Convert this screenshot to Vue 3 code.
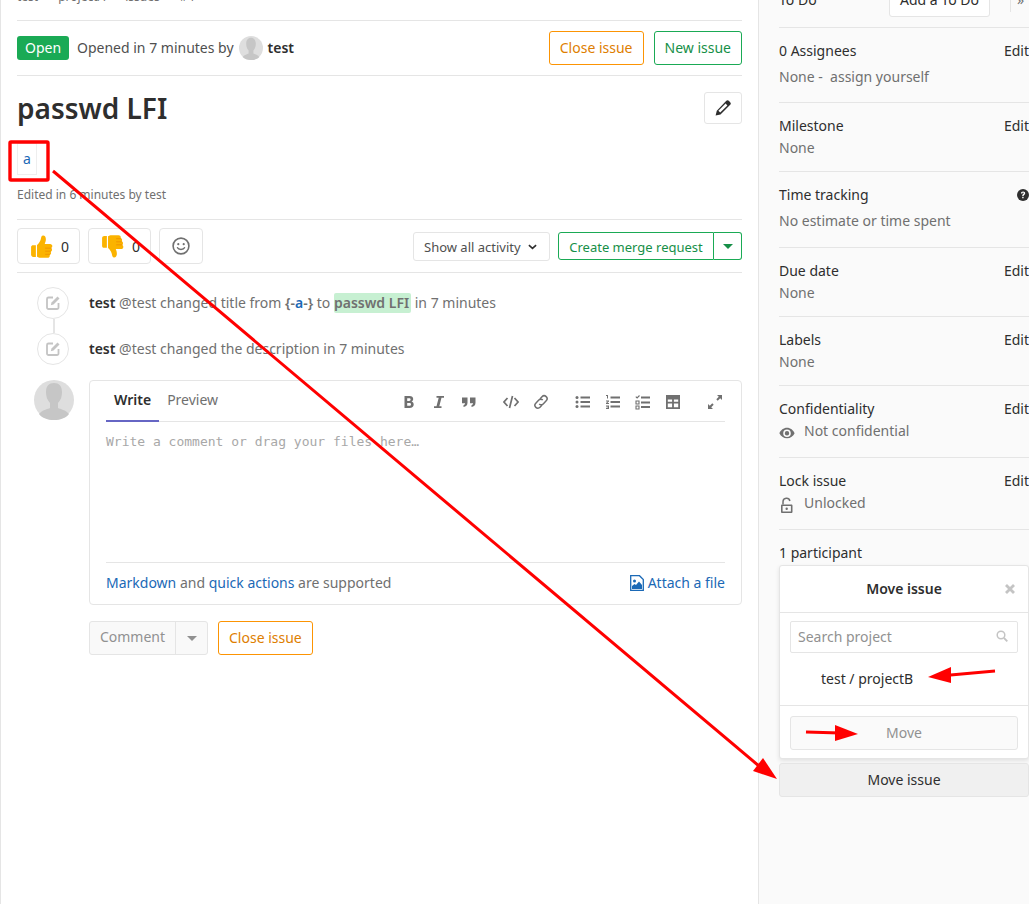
<script setup>
const breadcrumbs = ['test', 'projectA', 'issues', '#4']
</script>

<template>
  <div class="page">
    <main class="main">
      <div class="crumbs">
        <span v-for="c in breadcrumbs" :key="c">{{ c }}</span>
      </div>

      <div class="issue-head">
        <span class="badge">Open</span>
        <span class="opened">Opened in 7 minutes by</span>
        <svg class="av24" viewBox="0 0 40 40"><circle cx="20" cy="20" r="20" fill="#dedede"/><path d="M6 35c3-4 8-5 10-6v-5c-3-3-4-7-4-11 0-6 3-10 8-10s8 4 8 10c0 4-1 8-4 11v5c2 1 7 2 10 6-3 3-8 5-14 5S9 38 6 35z" fill="#c6c6c6"/></svg>
        <b class="author">test</b>
        <span class="spacer"></span>
        <button class="btn warn">Close issue</button>
        <button class="btn ok">New issue</button>
      </div>

      <div class="title-row">
        <h2>passwd LFI</h2>
        <button class="btn edit">
          <svg viewBox="0 0 16 16" width="16" height="16"><path d="M11.300 .8a1.800 1.800 0 0 1 2.500 0l1.400 1.400a1.800 1.800 0 0 1 0 2.500L5.500 14.400 .6 15.600l1.200-4.900zM3.400 10.800l1.800 1.800 7.200-7.200-1.800-1.800z" fill="#2e2e2e"/></svg>
        </button>
      </div>

      <div class="desc"><a>a</a></div>
      <div class="edited">Edited in 6 minutes by test</div>

      <div class="awards">
        <button class="award">
          <svg viewBox="0 0 24 24" width="25" height="25"><path d="M2 12.500c0-1.200 1-1.800 2-1.800h2.600V22H4c-1 0-2-.8-2-2zM7.700 10.600c1.500-1 3-3.300 3.600-5.500.4-1.600.4-3.600 2.300-3.600 1.700 0 2.600 1.600 2.600 3.600 0 1.700-.6 3.200-1.100 4.400h5.200c1.200 0 2.100 1 2.100 2.100 0 .8-.5 1.500-1.100 1.900.5.4.8 1 .8 1.600 0 .9-.6 1.600-1.300 1.900.3.4.4.8.4 1.200 0 .9-.6 1.600-1.400 1.900.1.300.2.500.2.800 0 1.100-1 2-2.100 2H11c-1.300 0-2.300-.6-3.300-1z" fill="#fbb300"/><path d="M15.500 13.600h6M15.500 16.500h5.500M15.500 19.500h4.500" stroke="#ef8f00" stroke-width=".8" fill="none"/></svg>
          <span>0</span>
        </button>
        <button class="award">
          <svg viewBox="0 0 24 24" width="25" height="25"><path d="M2 11.500c0 1.200 1 1.800 2 1.800h2.600V2H4C3 2 2 2.800 2 4zM7.700 13.400c1.500 1 3 3.300 3.600 5.500.4 1.600.4 3.600 2.300 3.600 1.700 0 2.600-1.600 2.600-3.600 0-1.700-.6-3.200-1.100-4.400h5.200c1.200 0 2.100-1 2.100-2.100 0-.8-.5-1.500-1.100-1.900.5-.4.8-1 .8-1.600 0-.9-.6-1.600-1.300-1.900.3-.4.4-.8.4-1.200 0-.9-.6-1.600-1.400-1.900.1-.3.2-.5.2-.8 0-1.100-1-2-2.100-2H11c-1.300 0-2.300.6-3.300 1z" fill="#fbb300"/><path d="M15.500 10.400h6M15.500 7.500h5.500M15.500 4.500h4.500" stroke="#ef8f00" stroke-width=".8" fill="none"/></svg>
          <span>0</span>
        </button>
        <button class="award smile">
          <svg viewBox="0 0 18 18" width="18" height="18"><circle cx="9" cy="9" r="7.900" fill="none" stroke="#707070" stroke-width="1.600"/><circle cx="6.300" cy="7.200" r="1.100" fill="#707070"/><circle cx="11.700" cy="7.200" r="1.100" fill="#707070"/><path d="M5.500 10.800c1 2.100 6 2.100 7 0" fill="none" stroke="#707070" stroke-width="1.500" stroke-linecap="round"/></svg>
        </button>
        <span class="spacer"></span>
        <button class="activity">
          Show all activity
          <svg viewBox="0 0 10 6" width="9" height="6"><path d="M1 1l4 3.500L9 1" fill="none" stroke="#2e2e2e" stroke-width="1.800"/></svg>
        </button>
        <div class="mr">
          <button class="mr-main">Create merge request</button>
          <button class="mr-caret"><i class="caret green"></i></button>
        </div>
      </div>

      <div class="note">
        <span class="note-icon">
          <svg viewBox="0 0 16 16" width="16" height="16"><path d="M8 2.500H3.500a1.500 1.500 0 0 0-1.500 1.500v8.500A1.500 1.500 0 0 0 3.500 14H12a1.500 1.500 0 0 0 1.500-1.500V8" fill="none" stroke="#c4c4c4" stroke-width="1.800"/><path d="M12.500 1.500l2 2L8.500 9.500l-2.700.7.700-2.700z" fill="#c4c4c4"/></svg>
        </span>
        <p><b>test</b> @test changed title from <b class="muted">{-<a>a</a>-}</b> to <b class="hl">passwd LFI</b> in 7 minutes</p>
      </div>
      <div class="note second">
        <span class="note-icon">
          <svg viewBox="0 0 16 16" width="16" height="16"><path d="M8 2.500H3.500a1.500 1.500 0 0 0-1.500 1.500v8.500A1.500 1.500 0 0 0 3.500 14H12a1.500 1.500 0 0 0 1.500-1.500V8" fill="none" stroke="#c4c4c4" stroke-width="1.800"/><path d="M12.500 1.500l2 2L8.500 9.500l-2.700.7.700-2.700z" fill="#c4c4c4"/></svg>
        </span>
        <p><b>test</b> @test changed the description in 7 minutes</p>
      </div>

      <div class="compose">
        <svg class="av40" viewBox="0 0 40 40"><circle cx="20" cy="20" r="20" fill="#dedede"/><path d="M5 34c3-4 9-5 11-6v-5c-3-3-4-7-4-11 0-6 3-9 8-9s8 3 8 9c0 4-1 8-4 11v5c2 1 8 2 11 6-3 4-9 6-15 6S8 38 5 34z" fill="#c6c6c6"/></svg>
        <div class="form-col">
          <div class="form">
            <div class="tabs">
              <span class="tab on">Write</span>
              <span class="tab">Preview</span>
              <div class="tools">
                <div class="tool-group">
                  <svg viewBox="0 0 16 16"><path d="M3.500 2h5c2.300 0 3.700 1.100 3.700 3 0 1.200-.6 2.100-1.700 2.600 1.400.4 2.200 1.500 2.200 2.900 0 2.200-1.600 3.500-4.200 3.500h-5zM6.200 4.200v2.700h1.900c1 0 1.500-.5 1.500-1.400s-.5-1.300-1.500-1.300zm0 4.800v2.800h2.100c1.100 0 1.700-.5 1.700-1.400S9.400 9 8.300 9z"/></svg>
                  <svg viewBox="0 0 16 16"><path d="M5.500 2H13v1.800h-2.500L8.300 12.200H10.500V14H3v-1.800h2.500l2.200-8.400H5.500z"/></svg>
                  <svg viewBox="0 0 16 16"><path d="M1 3.500h5.500v5.200c0 2.400-1.600 4-4 4.300v-1.800c1-.3 1.500-1 1.600-1.900H1zM9 3.500h5.500v5.200c0 2.400-1.600 4-4 4.300v-1.800c1-.3 1.500-1 1.600-1.900H9z"/></svg>
                </div>
                <div class="tool-group">
                  <svg viewBox="0 0 16 16" fill="none" stroke="#707070" stroke-width="1.700"><path d="M4.500 4L1 8l3.500 4M11.500 4L15 8l-3.500 4M9.500 2L6.500 14"/></svg>
                  <svg viewBox="0 0 16 16" fill="none" stroke="#707070" stroke-width="1.500"><path d="M7 5l2-2.300a2.900 2.900 0 0 1 4.200 4.100l-3 3.200a2.800 2.800 0 0 1-4 0"/><path d="M9 11l-2 2.300a2.900 2.900 0 0 1-4.200-4.100l3-3.200a2.800 2.800 0 0 1 4 0"/></svg>
                </div>
                <div class="tool-group">
                  <svg viewBox="0 0 16 16"><path d="M5.500 2.500H15v2H5.500zM5.500 7H15v2H5.500zM5.500 11.500H15v2H5.500z"/><circle cx="2" cy="3.500" r="1.500"/><circle cx="2" cy="8" r="1.500"/><circle cx="2" cy="12.500" r="1.500"/></svg>
                  <svg viewBox="0 0 16 16"><path d="M5.500 2.500H15v2H5.500zM5.500 7H15v2H5.500zM5.500 11.500H15v2H5.500zM1 1h2v3.500H2V2H1zM1 6.500h3v.9L2.300 9H4v1H1v-.9L2.700 7.500H1zM1 11.500h3v3.500H1v-1h2v-.5H1.500v-.8H3V12.400H1z"/></svg>
                  <svg viewBox="0 0 16 16"><path d="M6 2.500h9v2H6zM6 7.500h9v2H6zM6 12h9v2H6z"/><path d="M.8 2.600l1.300 1.300L4.500 1.500" fill="none" stroke="#707070" stroke-width="1.100"/><path d="M1 7h3v3H1zM1 12h3v3H1z" fill="none" stroke="#707070" stroke-width="1.100"/></svg>
                  <svg viewBox="0 0 16 16"><path fill-rule="evenodd" d="M1 1h14v14H1zM2.800 5.500v2.300h4.300V5.500zm6.100 0v2.300h4.300V5.500zM2.800 9.500v3.700h4.300V9.500zm6.100 0v3.700h4.300V9.500z"/></svg>
                </div>
                <div class="tool-group">
                  <svg viewBox="0 0 16 16"><path d="M10 1h5v5l-1.800-1.800-2.500 2.500-1.400-1.400 2.500-2.500zM1 15v-5l1.800 1.800 2.500-2.500 1.400 1.400-2.500 2.500L6 15z"/></svg>
                </div>
              </div>
            </div>
            <div class="editor">Write a comment or drag your files here…</div>
            <div class="form-foot">
              <span><a>Markdown</a> and <a>quick actions</a> are supported</span>
              <a class="attach">
                <svg viewBox="0 0 14 16" width="14" height="16"><path d="M.7.700h8.800l3.800 3.800v10.800H.7z" fill="#fff" stroke="#1b69b6" stroke-width="1.300"/><circle cx="4.500" cy="6" r="1.500" fill="#1b69b6"/><path d="M2 14v-3l2.500-2 1.500 1 3-3.500 3 3.500v4z" fill="#1b69b6"/></svg>
                Attach a file
              </a>
            </div>
          </div>
          <div class="form-actions">
            <div class="comment-split">
              <span class="comment-main">Comment</span>
              <span class="comment-caret"><i class="caret grey"></i></span>
            </div>
            <button class="btn warn">Close issue</button>
          </div>
        </div>
      </div>
    </main>

    <aside class="side">
      <div class="todo">
        <span>To Do</span>
        <span class="spacer"></span>
        <button class="add-todo">Add a To Do</button>
        <span class="sep"></span>
        <span class="collapse">»</span>
      </div>

      <div class="block">
        <div class="row"><span>0 Assignees</span><span>Edit</span></div>
        <div class="value wide tight">None -&nbsp; assign yourself</div>
      </div>
      <div class="block">
        <div class="row"><span>Milestone</span><span>Edit</span></div>
        <div class="value">None</div>
      </div>
      <div class="block">
        <div class="row">
          <span>Time tracking</span>
          <svg class="help" viewBox="0 0 14 14" width="14" height="14"><circle cx="7" cy="7" r="6" fill="#2e2e2e"/><path d="M4.900 5.400c0-1.200.9-2 2.200-2s2.100.8 2.100 1.800c0 1.500-1.600 1.500-1.600 2.700H6.200c0-1.800 1.500-1.800 1.500-2.600 0-.4-.2-.7-.6-.7-.5 0-.7.300-.7.800zM6.200 8.800h1.400v1.500H6.200z" fill="#fff"/></svg>
        </div>
        <div class="value wide">No estimate or time spent</div>
      </div>
      <div class="block">
        <div class="row"><span>Due date</span><span>Edit</span></div>
        <div class="value">None</div>
      </div>
      <div class="block">
        <div class="row"><span>Labels</span><span>Edit</span></div>
        <div class="value">None</div>
      </div>
      <div class="block">
        <div class="row"><span>Confidentiality</span><span>Edit</span></div>
        <div class="value roomy">
          <svg viewBox="0 0 16 16" width="16" height="16"><path fill-rule="evenodd" d="M8 2.800c3.500 0 6.300 2.500 7.600 5.400-1.300 2.900-4.100 5-7.600 5S1.700 11.100.4 8.200C1.700 5.300 4.500 2.800 8 2.800zm0 1.600a3.800 3.800 0 1 0 0 7.600 3.800 3.800 0 0 0 0-7.600zm0 1.600a2.200 2.200 0 1 1 0 4.400 2.200 2.200 0 0 1 0-4.400z" fill="#707070"/></svg>
          Not confidential
        </div>
      </div>
      <div class="block">
        <div class="row"><span>Lock issue</span><span>Edit</span></div>
        <div class="value roomy">
          <svg viewBox="0 0 16 16" width="16" height="16"><path fill-rule="evenodd" d="M3 7.500h9.500c.5 0 1 .5 1 1V15c0 .5-.5 1-1 1H3c-.5 0-1-.5-1-1V8.500c0-.5.5-1 1-1zm.6 1.500v5.500h8.300V9zm4.100 1.500a1.200 1.200 0 1 1 0 2.400 1.200 1.200 0 0 1 0-2.400z" fill="#707070"/><path d="M4 7.500V4.800a3.500 3.500 0 0 1 6.900-.8" fill="none" stroke="#707070" stroke-width="1.500"/></svg>
          Unlocked
        </div>
      </div>

      <div class="participants">
        <div>1 participant</div>
        <div class="popup">
          <div class="popup-head">
            <span>Move issue</span>
            <svg class="popup-close" viewBox="0 0 10 10" width="10" height="10"><path d="M1 1l8 8M9 1l-8 8" stroke="#c4c4c4" stroke-width="2.800"/></svg>
          </div>
          <div class="popup-body">
            <div class="search">
              <span>Search project</span>
              <svg viewBox="0 0 12 12" width="12" height="12"><circle cx="5" cy="5" r="3.800" fill="none" stroke="#c4c4c4" stroke-width="1.500"/><path d="M8 8l3.300 3.300" stroke="#c4c4c4" stroke-width="1.800"/></svg>
            </div>
            <div class="project">test / projectB</div>
          </div>
          <div class="popup-foot">
            <button class="move">Move</button>
          </div>
        </div>
        <button class="move-issue">Move issue</button>
      </div>
    </aside>

    <svg class="marks" viewBox="0 0 1029 904" width="1029" height="904">
      <rect x="10" y="142" width="38" height="38" rx="1" fill="none" stroke="#ff0000" stroke-width="3.400"/>
      <path d="M53 171L759 766" stroke="#ff0000" stroke-width="3" fill="none"/>
      <path d="M777 779L763 758L753 771z" fill="#ff0000"/>
      <path d="M995 671L945 675.500" stroke="#ff0000" stroke-width="3" fill="none"/>
      <path d="M928 677L951 667L951 683z" fill="#ff0000"/>
      <path d="M806 732L840 733" stroke="#ff0000" stroke-width="3" fill="none"/>
      <path d="M858 734L835 725L835 741z" fill="#ff0000"/>
    </svg>
  </div>
</template>

<style>
html, body { margin: 0; overflow: hidden; background: #fff; }
</style>

<style scoped>
* { box-sizing: border-box; }
.page {
  position: relative;
  display: flex;
  width: 1029px;
  height: 904px;
  overflow: hidden;
  font-family: "Noto Sans", sans-serif;
  font-size: 14px;
  color: #2e2e2e;
  background: #fff;
}
button { font-family: inherit; cursor: default; }
a { color: #1b69b6; }
p { margin: 0; }
.spacer { flex: 1; }

.main {
  flex: none;
  width: 758px;
  height: 932px;
  margin-top: -28px;
  padding: 0 16px;
  border-left: 1px solid #e5e5e5;
}
.crumbs {
  display: flex;
  align-items: center;
  gap: 20px;
  height: 49px;
  border-bottom: 1px solid #e5e5e5;
  font-size: 12px;
  color: #707070;
}
.issue-head {
  display: flex;
  align-items: center;
  height: 55px;
  border-bottom: 1px solid #e5e5e5;
}
.badge {
  width: 52px;
  height: 24px;
  border-radius: 3px;
  margin-right: 8px;
  background: #1aaa55;
  color: #fff;
  line-height: 24px;
  text-align: center;
}
.opened { color: #4f4f4f; padding-bottom: 2px; }
.av24 { width: 24px; height: 24px; margin: 0 5px 0 5px; }
.author { font-weight: 600; color: #2e2e2e; padding-bottom: 2px; }
.btn {
  height: 34px;
  padding: 0 10px 2px;
  border: 1px solid #e5e5e5;
  border-radius: 3px;
  background: #fff;
  font-size: 14px;
}
.warn { border-color: #fc9403; color: #de7e00; }
.ok { border-color: #1aaa55; color: #168f48; margin-left: 10px; }

.title-row {
  display: flex;
  justify-content: space-between;
  margin-top: 16px;
}
h2 {
  margin: 0;
  font-size: 28px;
  font-weight: 600;
  line-height: 32px;
  color: #2e2e2e;
}
.edit {
  display: flex;
  align-items: center;
  justify-content: center;
  width: 38px;
  height: 32px;
  padding: 0;
}
.desc {
  width: 20px;
  height: 32px;
  margin-top: 19px;
  border: 1px solid #eee;
  line-height: 30px;
  text-align: center;
}
.edited {
  margin-top: 12px;
  height: 16px;
  line-height: 16px;
  font-size: 12px;
  color: #707070;
}
.awards {
  display: flex;
  align-items: center;
  gap: 8px;
  height: 54px;
  margin-top: 16px;
  border-top: 1px solid #e5e5e5;
  border-bottom: 1px solid #e5e5e5;
}
.award {
  display: flex;
  align-items: center;
  gap: 7px;
  width: 63px;
  height: 36px;
  padding: 0 0 0 11px;
  border: 1px solid #e5e5e5;
  border-radius: 4px;
  background: #fff;
  font-size: 14px;
  color: #2e2e2e;
}
.smile {
  width: 44px;
  padding: 0;
  justify-content: center;
}
.activity {
  display: flex;
  align-items: center;
  gap: 7px;
  width: 137px;
  height: 29px;
  padding: 2px 10px 0;
  border: 1px solid #e5e5e5;
  border-radius: 3px;
  background: #fff;
  font-size: 13px;
  color: #4f4f4f;
}
.mr { display: flex; height: 28px; }
.mr-main {
  width: 156px;
  padding: 2px 0 0;
  border: 1px solid #1aaa55;
  border-radius: 3px 0 0 3px;
  background: #fff;
  font-size: 13px;
  color: #168f48;
}
.mr-caret {
  display: flex;
  align-items: center;
  justify-content: center;
  width: 28px;
  padding: 0;
  border: 1px solid #1aaa55;
  border-left: 0;
  border-radius: 0 3px 3px 0;
  background: #fff;
}
.caret {
  display: block;
  width: 0;
  height: 0;
  border-style: solid;
  border-width: 5px 5px 0;
  border-color: transparent;
}
.green { border-top-color: #168f48; }
.grey { border-top-color: #919191; }

.note {
  position: relative;
  display: flex;
  align-items: center;
  gap: 20px;
  height: 32px;
  margin: 14px 0 0 20px;
  color: #707070;
}
.note b { font-weight: 600; color: #2e2e2e; }
.note a { font-weight: 600; }
.note .muted { color: #707070; }
.note .hl {
  padding: 0 2px 0 0;
  border-radius: 2px;
  background: #c7f0d2;
  color: #707070;
  line-height: 20px;
  display: inline-block;
}
.second p { margin-bottom: 2px; }
.second::before {
  content: "";
  position: absolute;
  left: 16px;
  top: -14px;
  width: 2px;
  height: 14px;
  background: #e5e5e5;
}
.note-icon {
  display: flex;
  flex: none;
  align-items: center;
  justify-content: center;
  width: 32px;
  height: 32px;
  border: 1px solid #e5e5e5;
  border-radius: 50%;
  background: #fff;
}
.compose { display: flex; gap: 15px; margin: 15px 0 0 17px; }
.av40 { flex: none; width: 40px; height: 40px; }
.form-col { flex: 1; }
.form {
  height: 225px;
  padding: 0 16px;
  border: 1px solid #e5e5e5;
  border-radius: 4px;
}
.tabs {
  display: flex;
  align-items: center;
  height: 41px;
  border-bottom: 1px solid #e5e5e5;
}
.tab {
  display: flex;
  align-items: center;
  height: 40px;
  padding: 0 8px 4px;
  margin-bottom: -1px;
  color: #707070;
}
.tab.on {
  font-weight: 600;
  color: #2e2e2e;
  border-bottom: 2px solid #6666c4;
  padding-bottom: 2px;
}
.tools {
  display: flex;
  gap: 26px;
  margin-left: auto;
  padding: 2px 2px 0 0;
}
.tool-group { display: flex; gap: 14px; }
.tool-group svg { width: 16px; height: 16px; fill: #707070; }
.tool-group svg[fill="none"] { fill: none; }
.editor {
  height: 141px;
  padding-top: 10px;
  border-bottom: 1px solid #e5e5e5;
  font-family: "DejaVu Sans Mono", monospace;
  font-size: 13px;
  line-height: 19px;
  color: #a8a8a8;
}
.form-foot {
  display: flex;
  align-items: center;
  justify-content: space-between;
  height: 41px;
  padding-bottom: 2px;
  color: #707070;
}
.attach { display: flex; align-items: center; gap: 4px; }
.form-actions {
  display: flex;
  gap: 10px;
  margin-top: 16px;
}
.comment-split {
  display: flex;
  height: 34px;
  border: 1px solid #e5e5e5;
  border-radius: 3px;
  background: #f9f9f9;
  color: #919191;
}
.comment-main {
  width: 86px;
  border-right: 1px solid #e5e5e5;
  line-height: 30px;
  text-align: center;
}
.comment-caret {
  display: flex;
  align-items: center;
  justify-content: center;
  width: 31px;
}

.side {
  flex: none;
  width: 291px;
  height: 932px;
  margin-top: -28px;
  padding: 0 20px;
  border-left: 1px solid #e5e5e5;
  background: #fafafa;
}
.todo {
  display: flex;
  align-items: center;
  height: 56px;
  border-bottom: 1px solid #e5e5e5;
}
.add-todo {
  width: 101px;
  height: 34px;
  padding: 0;
  border: 1px solid #e5e5e5;
  border-radius: 3px;
  background: #fff;
  font-size: 14px;
  color: #2e2e2e;
}
.sep {
  width: 1px;
  height: 24px;
  margin: 0 6px 0 20px;
  background: #e5e5e5;
}
.collapse { width: 12px; color: #707070; }
.block {
  padding: 13px 0;
  border-bottom: 1px solid #e5e5e5;
}
.row {
  display: flex;
  align-items: center;
  justify-content: space-between;
  height: 20px;
  line-height: 20px;
}
.help { margin-right: -1px; }
.value {
  display: flex;
  align-items: center;
  height: 20px;
  margin-top: 2px;
  padding-bottom: 2px;
  color: #707070;
}
.wide { margin-top: 6px; margin-bottom: 3px; }
.wide.tight { margin-bottom: 2px; }
.roomy { gap: 9px; margin-bottom: 3px; }
.roomy svg { margin-top: 5px; }
.participants { padding-top: 13px; }
.participants > div:first-child { height: 20px; line-height: 20px; }
.popup {
  margin-top: 2px;
  height: 194px;
  border: 1px solid #e5e5e5;
  border-radius: 3px;
  background: #fff;
  box-shadow: 0 2px 4px rgba(0, 0, 0, .1);
}
.popup-head {
  position: relative;
  height: 47px;
  border-bottom: 1px solid #e5e5e5;
  font-weight: 600;
  line-height: 46px;
  text-align: center;
}
.popup-close { position: absolute; top: 18px; right: 13px; }
.popup-body {
  height: 93px;
  padding: 8px 10px 0;
  border-bottom: 1px solid #e5e5e5;
}
.search {
  display: flex;
  align-items: center;
  justify-content: space-between;
  height: 32px;
  padding: 0 9px 2px 7px;
  border: 1px solid #e5e5e5;
  border-radius: 2px;
  color: #919191;
}
.project { margin: 16px 0 0 31px; line-height: 20px; }
.popup-foot { padding: 10px; }
.move {
  width: 100%;
  height: 34px;
  padding-bottom: 2px;
  border: 1px solid #e5e5e5;
  border-radius: 3px;
  background: #fafafa;
  font-size: 14px;
  color: #919191;
}
.move-issue {
  display: block;
  width: 100%;
  height: 34px;
  margin-top: 4px;
  padding-bottom: 2px;
  border: 1px solid #e5e5e5;
  border-radius: 3px;
  background: #f0f0f0;
  font-size: 14px;
  color: #2e2e2e;
}
.marks {
  position: absolute;
  left: 0;
  top: 0;
  pointer-events: none;
}
</style>
